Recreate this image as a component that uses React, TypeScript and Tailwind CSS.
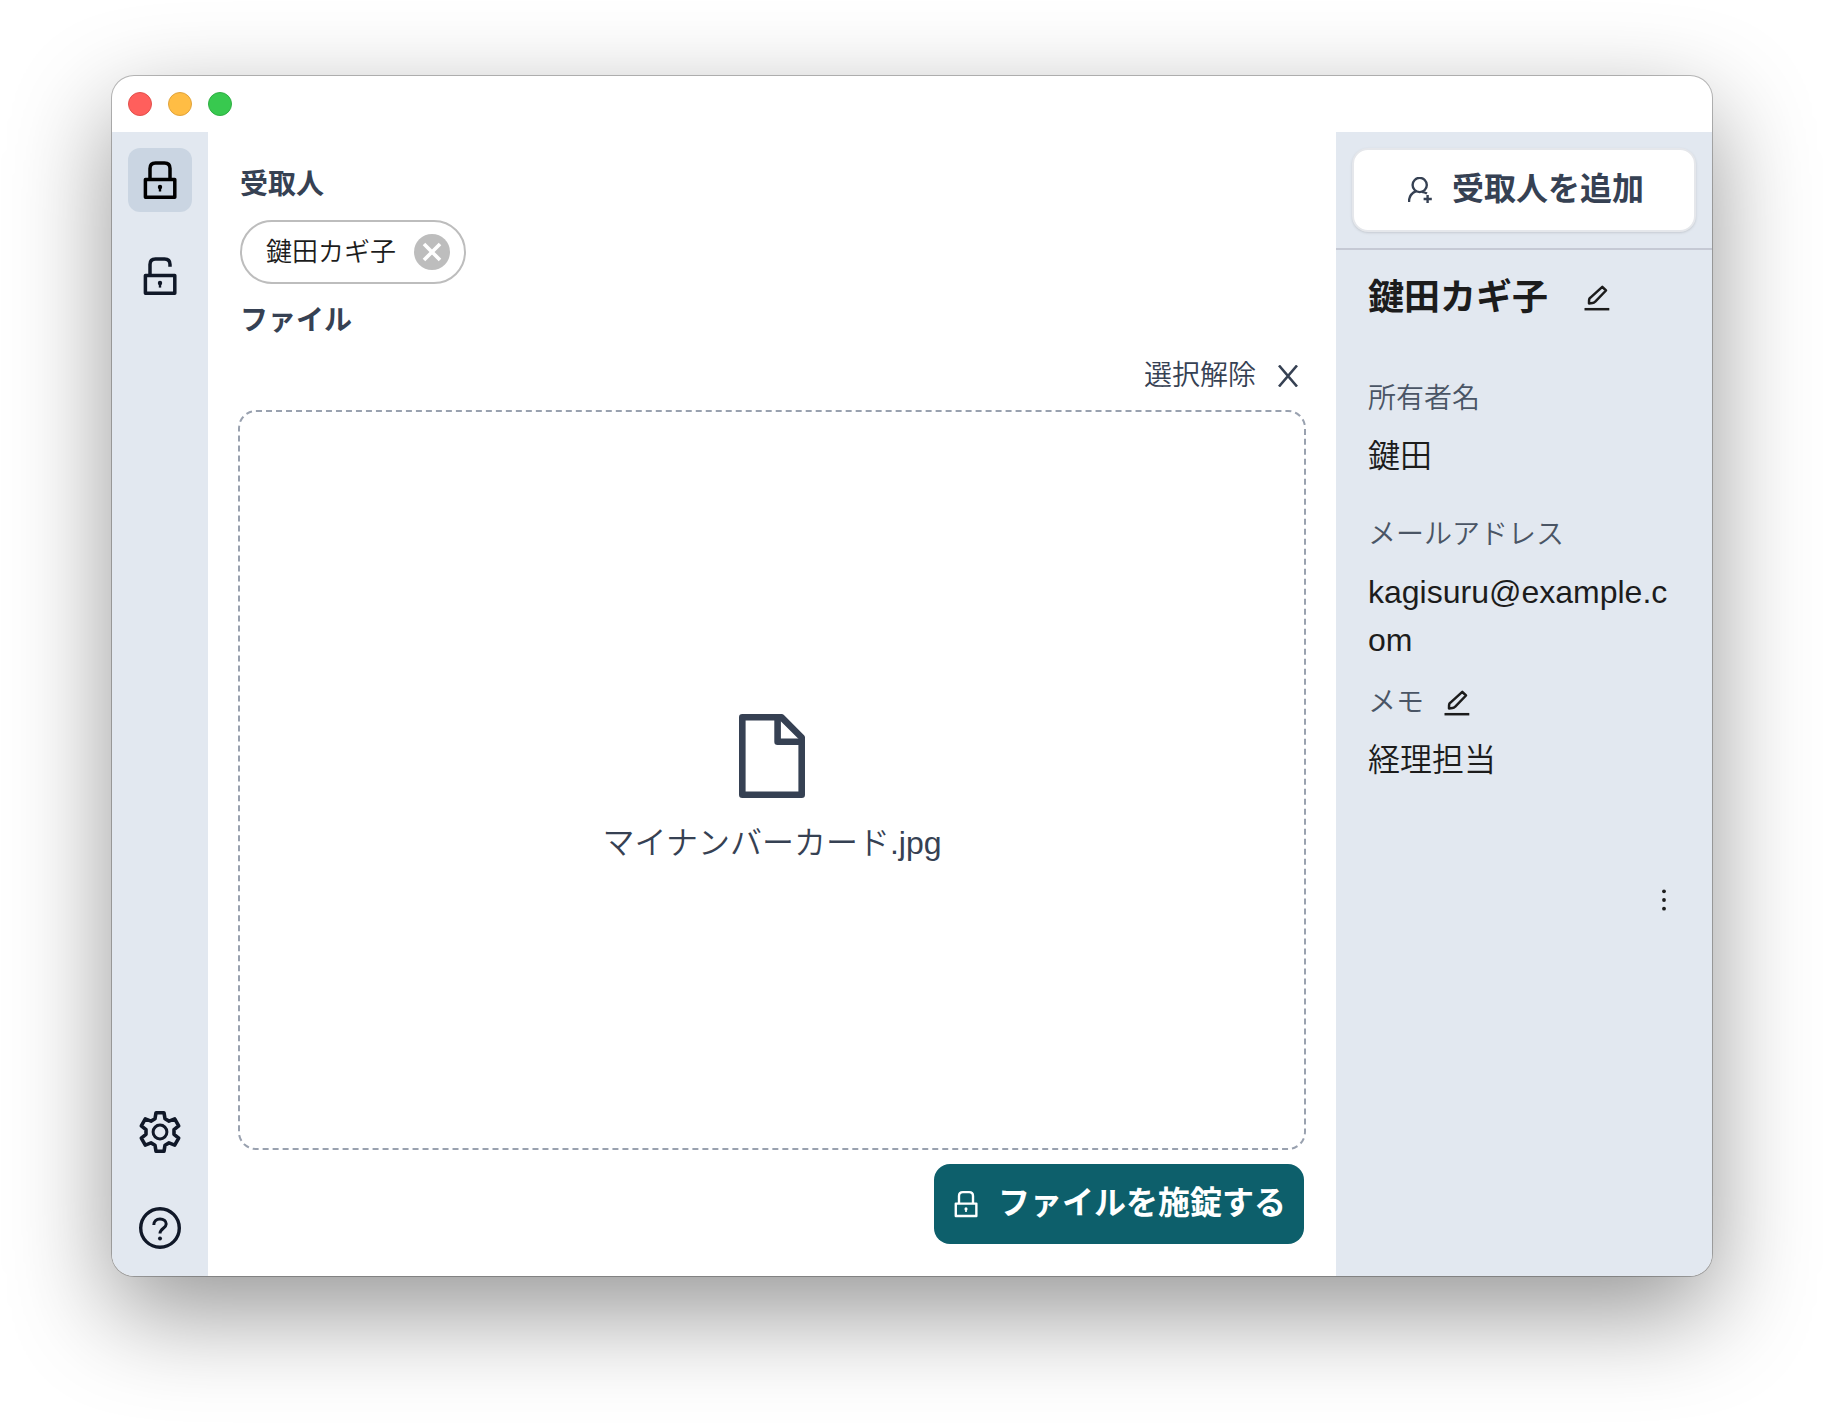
import { useState } from 'react';
import type { ReactNode } from 'react';

interface Recipient {
  name: string;
  owner: string;
  email: string;
  memo: string;
}

const recipient: Recipient = {
  name: '鍵田カギ子',
  owner: '鍵田',
  email: 'kagisuru@example.com',
  memo: '経理担当',
};

type Tab = 'lock' | 'unlock' | 'settings' | 'help';

function LockIcon({ open = false, className, stroke = 3.5 }: { open?: boolean; className?: string; stroke?: number }) {
  return (
    <svg viewBox="0 0 40 40" fill="none" stroke="currentColor" strokeWidth={stroke} strokeLinejoin="round" className={className}>
      <rect x="5.4" y="19.4" width="29.4" height="17.8" />
      <path d={open ? 'M10 19V8.5Q10 3 15.5 3H24.5Q30 3 30 8.5V10.7' : 'M10 19V8.5Q10 3 15.5 3H24.5Q30 3 30 8.5V19'} />
      <circle cx="20" cy="27" r="2.2" fill="currentColor" stroke="none" />
      <path d="M20 27V31.6" strokeWidth="2.4" />
    </svg>
  );
}

function GearIcon() {
  return (
    <svg viewBox="-24 -24 48 48" fill="none" stroke="currentColor" strokeWidth="3.6" strokeLinejoin="round" className="size-12">
      <path d="M-4 -19.3H4L5 -13.2L9 -10.9L14.7 -13.1L18.7 -6.2L14 -2.3V2.3L18.7 6.2L14.7 13.1L9 10.9L5 13.2L4 19.3H-4L-5 13.2L-9 10.9L-14.7 13.1L-18.7 6.2L-14 2.3V-2.3L-18.7 -6.2L-14.7 -13.1L-9 -10.9L-5 -13.2Z" />
      <circle r="6.9" strokeWidth="3" />
    </svg>
  );
}

function HelpIcon() {
  return (
    <svg viewBox="-24 -24 48 48" fill="none" stroke="currentColor" strokeWidth="3.4" className="size-12">
      <circle r="19.3" />
      <path d="M-6.2 -3C-6.2 -6.8 -3.6 -9.1 0 -9.1C3.8 -9.1 6.2 -6.8 6.2 -4C6.2 0.2 0 0.4 0 5.6" strokeWidth="3" />
      <circle cy="10.6" r="2" fill="currentColor" stroke="none" />
    </svg>
  );
}

function UserPlusIcon() {
  return (
    <svg viewBox="0 0 24 26" fill="none" stroke="currentColor" strokeWidth="2.4" className="h-[26px] w-6">
      <circle cx="11.7" cy="8" r="7.1" />
      <path d="M1 25C1 19.5 3.6 16 8.2 14.2" />
      <path d="M13.6 14.9Q16.8 15.2 19 16.6" />
      <path d="M19.6 18V26M15.6 22H23.8" />
    </svg>
  );
}

function PencilIcon() {
  return (
    <svg viewBox="0 0 26 26" fill="none" stroke="currentColor" strokeWidth="2.5" strokeLinejoin="round" className="size-[26px]">
      <path d="M18.3 1.8L22 5.5L11 16.8Q10 18 8.5 18.1L5 18.4L5.1 15Q5.2 13.6 6.2 12.8Z" />
      <path d="M0.5 24.2H25.3" />
    </svg>
  );
}

function FileIcon() {
  return (
    <svg viewBox="0 0 96 96" fill="none" stroke="currentColor" strokeWidth="6.6" strokeLinejoin="round" className="size-24">
      <path d="M18.3 9.3H57.6L77.7 29.5V86.7H18.3Z" />
      <path d="M53.6 9.3V33.7H77.7" />
    </svg>
  );
}

function SideButton({ label, active, onClick, children }: { label: string; active: boolean; onClick: () => void; children: ReactNode }) {
  return (
    <button
      type="button"
      aria-label={label}
      onClick={onClick}
      className={`flex size-16 items-center justify-center rounded-xl ${active ? 'bg-slate-300 text-black' : 'text-gray-900'}`}
    >
      {children}
    </button>
  );
}

export default function App() {
  const [tab, setTab] = useState<Tab>('lock');

  return (
    <div className="flex h-screen bg-white px-28 pt-19 pb-37 font-['Liberation_Sans','Noto_Sans_CJK_JP',sans-serif]">
      <div className="flex min-w-0 flex-1 flex-col overflow-hidden rounded-[22px] bg-white shadow-[0_0_0_1px_rgba(0,0,0,0.25),0_36px_100px_rgba(0,0,0,0.42)]">

        {/* Title bar */}
        <header className="flex h-14 shrink-0 items-center gap-4 px-4">
          <span className="size-6 rounded-full border border-[#e2504c] bg-[#ff5f5c]" />
          <span className="size-6 rounded-full border border-[#e0a33c] bg-[#ffbd44]" />
          <span className="size-6 rounded-full border border-[#2fae43] bg-[#38c94f]" />
        </header>

        <div className="flex min-h-0 flex-1">
          {/* Side navigation */}
          <nav className="flex w-24 shrink-0 flex-col items-center gap-8 bg-slate-200 py-4">
            <SideButton label="施錠" active={tab === 'lock'} onClick={() => setTab('lock')}>
              <LockIcon className="size-10" />
            </SideButton>
            <SideButton label="解錠" active={tab === 'unlock'} onClick={() => setTab('unlock')}>
              <LockIcon open className="size-10" />
            </SideButton>
            <div className="flex-1" />
            <SideButton label="設定" active={tab === 'settings'} onClick={() => setTab('settings')}>
              <GearIcon />
            </SideButton>
            <SideButton label="ヘルプ" active={tab === 'help'} onClick={() => setTab('help')}>
              <HelpIcon />
            </SideButton>
          </nav>

          <main className="flex min-w-0 flex-1 flex-col gap-[14px] p-8 text-gray-700">
            <h2 className="text-[28px] leading-[42px] font-bold">受取人</h2>
            <div className="flex">
              <div className="flex h-16 items-center gap-[18px] rounded-full border-2 border-[#bdbdbd] pr-3.5 pl-6">
                <span className="text-[26px] leading-10 font-[350] text-[#1c1c1c]">{recipient.name}</span>
                <button type="button" aria-label="受取人を外す" className="rounded-full bg-[#bdbdbd] text-white">
                  <svg viewBox="0 0 36 36" fill="none" stroke="currentColor" strokeWidth="3.6" className="size-9">
                    <path d="M10 10L26 26M26 10L10 26" />
                  </svg>
                </button>
              </div>
            </div>

            <h2 className="pt-0.5 text-[28px] leading-[42px] font-bold">ファイル</h2>
            <div className="flex justify-end pr-1.5">
              <button type="button" className="flex items-center gap-[22px] text-[28px] leading-10 font-[350]">
                選択解除
                <svg viewBox="0 0 20 22" fill="none" stroke="currentColor" strokeWidth="2.6" className="h-[22px] w-5">
                  <path d="M1 0.5L19 21.5M19 0.5L1 21.5" />
                </svg>
              </button>
            </div>

            {/* Drop area */}
            <div className="-mx-0.5 flex min-h-0 flex-1 flex-col items-center justify-center gap-4 rounded-[18px] border-2 border-dashed border-gray-400 pt-[14px]">
              <FileIcon />
              <p className="text-[32px] leading-[46px] font-[350]">マイナンバーカード.jpg</p>
            </div>

            <div className="flex justify-end">
              <button type="button" className="flex h-20 items-center gap-5 rounded-2xl bg-[#0d5f6b] pr-[18px] pl-5 text-[32px] leading-12 font-bold text-white">
                <LockIcon stroke={3.4} className="size-7 -mx-0.5" />
                <span className="pb-0.5">ファイルを施錠する</span>
              </button>
            </div>
          </main>

          {/* Recipient detail */}
          <aside className="flex w-[376px] shrink-0 flex-col bg-slate-200 text-[#1c1c1c]">
            <div className="border-b-2 border-[#c5c9d4] p-4">
              <button type="button" className="flex h-21 w-full items-center justify-center gap-5 rounded-2xl border-2 border-gray-200 bg-white pl-1 text-[32px] leading-12 font-bold text-gray-700 shadow-sm">
                <UserPlusIcon />
                <span className="pb-0.5">受取人を追加</span>
              </button>
            </div>

            <div className="flex flex-col px-8 pt-6">
              <div className="flex items-center gap-9">
                <h1 className="text-4xl leading-12 font-bold">{recipient.name}</h1>
                <button type="button" aria-label="名前を編集"><PencilIcon /></button>
              </div>

              <dl className="mt-14 flex flex-col gap-3 text-[32px] leading-12 font-[350]">
                <dt className="text-[28px] leading-[42px] text-gray-600">所有者名</dt>
                <dd className="mb-[22px]">{recipient.owner}</dd>
                <dt className="text-[28px] leading-[42px] text-gray-600">メールアドレス</dt>
                <dd className="mb-1.5 break-all">{recipient.email}</dd>
                <dt className="flex items-center gap-5 text-[28px] leading-[42px] text-gray-600">
                  メモ
                  <button type="button" aria-label="メモを編集" className="text-[#1c1c1c]"><PencilIcon /></button>
                </dt>
                <dd>{recipient.memo}</dd>
              </dl>

              <button type="button" aria-label="メニュー" className="-mr-0.5 mt-[98px] flex size-9 items-center justify-center self-end">
                <svg viewBox="0 0 24 24" fill="currentColor" className="size-6">
                  <circle cx="12" cy="3.3" r="1.9" />
                  <circle cx="12" cy="12" r="1.9" />
                  <circle cx="12" cy="20.7" r="1.9" />
                </svg>
              </button>
            </div>
          </aside>
        </div>
      </div>
    </div>
  );
}
